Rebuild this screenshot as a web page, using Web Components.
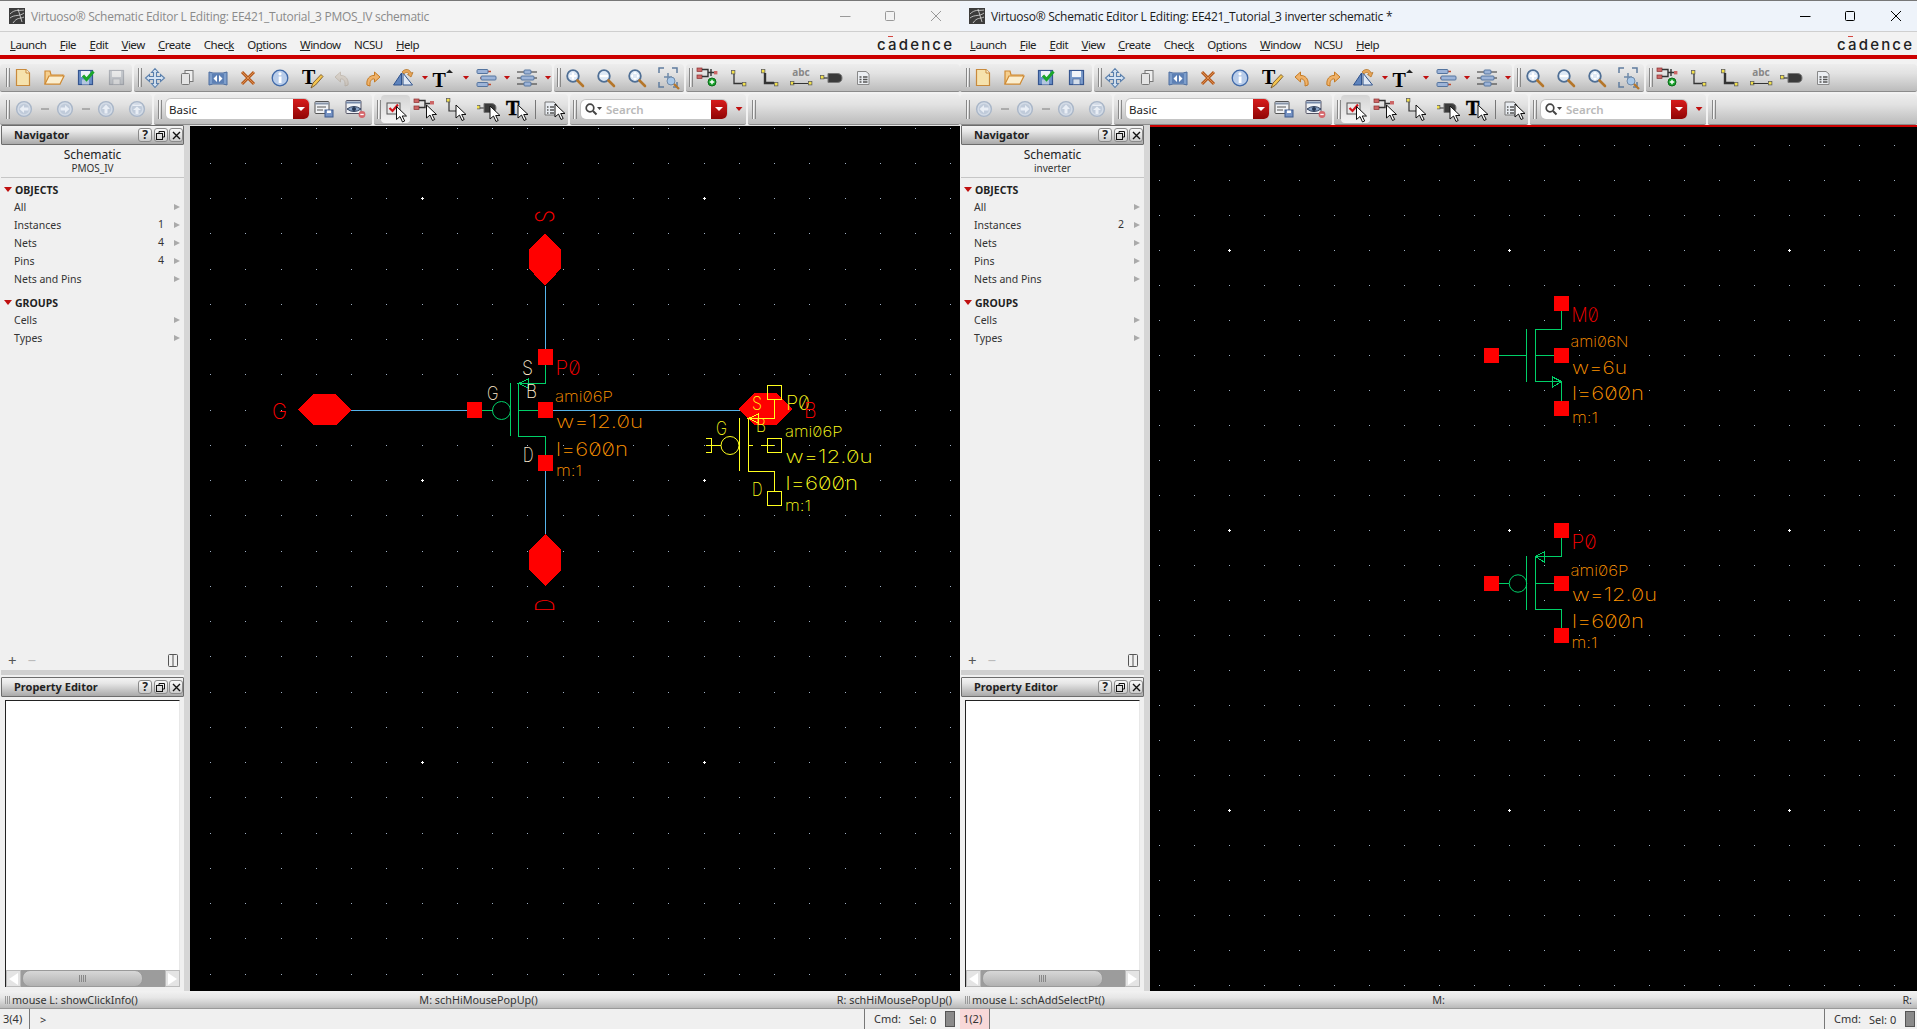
<!DOCTYPE html>
<html><head><meta charset="utf-8"><title>Virtuoso</title>
<style>html,body{margin:0;padding:0;width:1917px;height:1029px;overflow:hidden;background:#d8d8d8}
body{display:flex;font-family:"Noto Sans","Open Sans",sans-serif}</style></head>
<body>
<vi-window label="Virtuoso® Schematic Editor L Editing: EE421_Tutorial_3 PMOS_IV schematic" cell="PMOS_IV" kind="pmos" counts="1,4,4" mouse-m="M: schHiMousePopUp()" mouse-l="mouse L: showClickInfo()" mouse-r="R: schHiMousePopUp()" hist="3(4)" prompt="&gt;" style="--w:960px;--rp:3px"></vi-window>
<vi-window active label="Virtuoso® Schematic Editor L Editing: EE421_Tutorial_3 inverter schematic *" cell="inverter" kind="inverter" counts="2,," mouse-m="M:" mouse-l="mouse L: schAddSelectPt()" mouse-r="R:" hist="1(2)" prompt="" style="--w:957px;--rp:0px"></vi-window>
<script>
const CUR=(x,y)=>`<path transform="translate(${x} ${y})" d="M0 0V13L3.5 10 6 15.5 8.2 14.5 5.7 9.5H10Z" fill="#fff" stroke="#111" stroke-width="1" stroke-linejoin="round"/>`;
const YS=(x,y)=>`<rect x="${x-1.5}" y="${y-1.5}" width="3.4" height="3.4" fill="#f2e04a" stroke="#555" stroke-width=".7"/>`;
const MAG=(c)=>`<circle cx="12" cy="12" r="5.8" fill="#dfe9f5" stroke="#4f6f95" stroke-width="1.8"/><path d="M16.5 16.5L22 22" stroke="#b5762a" stroke-width="2.6" stroke-linecap="round"/>${c}`;
const CIRC=(c)=>`<circle cx="14" cy="14" r="7.4" fill="#d3dbe6" stroke="#a9b6c8" stroke-width="1.4"/><circle cx="14" cy="14" r="5.2" fill="#c0cbda"/>${c}`;
const ICONS={
new:`<path d="M7.5 5.5H17L20.5 9V21.5H7.5Z" fill="#f6e2ad" stroke="#c88a3c" stroke-width="1.2"/><path d="M17 5.5V9H20.5" fill="#fff6d8" stroke="#c88a3c"/>`,
open:`<path d="M5 7V20H20L23 11H11L10 7Z" fill="#f5cf8f" stroke="#cf8a33" stroke-width="1.2"/><path d="M5 20L9 12H24L20 20Z" fill="#fbeecf" stroke="#cf8a33" stroke-width="1.2"/>`,
savecheck:`<rect x="6.5" y="6.5" width="14" height="14" fill="#6a8fc8" stroke="#35558f" stroke-width="1.2"/><rect x="9" y="7" width="9" height="6" fill="#eef2f8"/><rect x="10" y="15.5" width="7" height="5" fill="#b5c6df"/><path d="M11 11.5L14.5 15.5 21.5 7.5" fill="none" stroke="#1aa62a" stroke-width="3"/>`,
save:`<rect x="6.5" y="6.5" width="14" height="14" fill="#7c9ccb" stroke="#35558f" stroke-width="1.2"/><rect x="9" y="7" width="9" height="6" fill="#f1f4f9"/><rect x="10" y="15" width="7" height="5.5" fill="#d5deea" stroke="#35558f" stroke-width=".6"/>`,
move:`<path d="M14 4.5L17.5 8.5H15.5V12.5H19.5V10.5L23.5 14 19.5 17.5V15.5H15.5V19.5H17.5L14 23.5 10.5 19.5H12.5V15.5H8.5V17.5L4.5 14 8.5 10.5V12.5H12.5V8.5H10.5Z" fill="#d6e3f2" stroke="#5b80ad" stroke-width="1.1"/>`,
copy:`<rect x="12" y="6.5" width="8" height="11" fill="#eee" stroke="#777"/><rect x="8.5" y="9.5" width="8" height="11" rx="1" fill="#e4e4e4" stroke="#777"/>`,
stretch:`<path d="M5 8L9 9H19L23 8V21L19 20H9L5 21Z" fill="#7f9fcc" stroke="#4d6d9e"/><rect x="8" y="10" width="12" height="9" fill="#5d80b5"/><path d="M13 11V18L9.5 14.5ZM15 11V18L18.5 14.5Z" fill="#fff"/>`,
del:`<path d="M8 8L20 20M20 8L8 20" stroke="#b5591d" stroke-width="3"/><path d="M8 8L20 20M20 8L8 20" stroke="#e39a5a" stroke-width=".8"/>`,
info:`<circle cx="14" cy="14" r="7.8" fill="#b9cdea" stroke="#3e68a8" stroke-width="1.3"/><rect x="12.7" y="12.5" width="2.8" height="6.5" fill="#fff"/><circle cx="14" cy="9.8" r="1.6" fill="#fff"/>`,
tpen:`<text x="4" y="20" font-family="Liberation Serif,serif" font-size="20" font-weight="700" fill="#000">T</text><path d="M13 24L15 19 23 10.5 25 12.5 17.5 21Z" fill="#f4c550" stroke="#6b4a1b" stroke-width=".8"/>`,
undo:`<path d="M20 21C21 15 17 11 12.5 11.5V8L7 13 12.5 18V15C15.5 14.5 17.5 17 17 22Z" fill="#efb26a" stroke="#c57a22"/>`,
redo:`<path d="M8 21C7 15 11 11 15.5 11.5V8L21 13 15.5 18V15C12.5 14.5 10.5 17 11 22Z" fill="#efb26a" stroke="#c57a22"/>`,
mirror:`<path d="M12.5 21H4.5L12.5 9Z" fill="#5f84bd" stroke="#2f528c"/><path d="M14 21H23.5L14 9Z" fill="#dfe8f4" stroke="#2f528c"/><path d="M13 8C16 4 21 5 22 9L24 8.5 22 13 18.5 10.5 20 10C19 8 16 8 15 10Z" fill="#e8a659" stroke="#b06f20" stroke-width=".7"/>`,
tcap:`<text x="3.5" y="23" font-family="Liberation Serif,serif" font-size="20" font-weight="700" fill="#000">T</text><path d="M17 9L20.5 5.5 24 9Z" fill="#222"/>`,
align1:`<path d="M5 7.5H19M8 14H24M5 20.5H19" stroke="#c4472c" stroke-width="1.3"/><rect x="5" y="5.5" width="11" height="4" rx="1" fill="#9db4d8" stroke="#54749f"/><rect x="9" y="12" width="15" height="4" rx="1" fill="#9db4d8" stroke="#54749f"/><rect x="5" y="18.5" width="11" height="4" rx="1" fill="#9db4d8" stroke="#54749f"/>`,
align2:`<path d="M4 8H24M4 14H24M4 20H24" stroke="#333" stroke-width="1"/><rect x="11" y="6" width="7" height="4" rx="1" fill="#9db4d8" stroke="#54749f"/><rect x="8" y="12" width="13" height="4" rx="1" fill="#9db4d8" stroke="#54749f"/><rect x="11" y="18" width="7" height="4" rx="1" fill="#9db4d8" stroke="#54749f"/>`,
zoomin:MAG(`<path d="M8.5 12H15.5M12 8.5V15.5" stroke="#fff" stroke-width="2.2"/>`),
zoomout:MAG(`<path d="M8 12H16" stroke="#fff" stroke-width="2.2"/>`),
zoomfit:MAG(`<path d="M12 7.5L14 10H10ZM12 16.5L14 14H10ZM7.5 12L10 10V14ZM16.5 12L14 10V14Z" fill="#fff"/>`),
zoomsel:`<path d="M5 9V4H10M18 4H23V9M23 18V23H19M10 23H5V18" fill="none" stroke="#5f7c9f" stroke-width="1.5"/><path d="M14 9V17M10 13H18" stroke="#6f8aa9" stroke-width="1.5"/><circle cx="17" cy="17" r="4" fill="#a9c8e8" stroke="#6f8aa9"/><path d="M20 20L25 25" stroke="#b5762a" stroke-width="2.2"/>`,
addconn:`<rect x="4" y="4" width="5" height="3.5" fill="#cc6666" stroke="#8b2f2f" stroke-width=".7"/><rect x="4" y="11" width="5" height="3.5" fill="#cc6666" stroke="#8b2f2f" stroke-width=".7"/><path d="M9 5.5H15V12.5H9M15 8.5H18M18 5V12M18 8.5H21" fill="none" stroke="#333" stroke-width="1.4"/><rect x="21" y="7" width="3.4" height="3.4" fill="#cc6666"/><circle cx="19" cy="18" r="4" fill="#17a32a" stroke="#0b6b18"/><path d="M16.7 18H21.3M19 15.7V20.3" stroke="#fff" stroke-width="1.4"/>`,
wire:`${YS(9,8)}<path d="M10 10V19.5H18" fill="none" stroke="#333" stroke-width="1.3"/>${YS(20,20)}`,
widewire:`${YS(7,7)}<path d="M9 9V19H18" fill="none" stroke="#333" stroke-width="2.4"/>${YS(20,20)}`,
label:`<text x="14" y="12" text-anchor="middle" font-family="Noto Sans,sans-serif" font-size="10" font-weight="700" fill="#888">abc</text>${YS(5,19)}<path d="M6 19.5H21" stroke="#333"/>${YS(23,19)}`,
pin:`${YS(4,13)}<path d="M6 14H11" stroke="#333" stroke-width="1.2"/><path d="M10 9.5H19Q24 9.5 24 14T19 18.5H10Z" fill="#3a3a3a" stroke="#777"/>`,
note:`<path d="M8.5 7.5H17L20 10V20.5H8.5Z" fill="#eceff3" stroke="#888"/><path d="M10.5 13H12.5M14 13H18.5M10.5 15.5H12.5M14 15.5H18.5M10.5 18H12.5M14 18H18.5" stroke="#555" stroke-width="1.3"/>`,
back:CIRC(`<path d="M9.5 14L14 10V12.5H18.5V15.5H14V18Z" fill="#e9eef5"/>`),
fwd:CIRC(`<path d="M18.5 14L14 10V12.5H9.5V15.5H14V18Z" fill="#e9eef5"/>`),
up:CIRC(`<path d="M14 9.5L18 14H15.5V18.5H12.5V14H10Z" fill="#e9eef5"/>`),
top:CIRC(`<path d="M9.5 9.5H18.5V11H9.5ZM14 11.5L18 15H15.5V19H12.5V15H10Z" fill="#e9eef5"/>`),
dash:`<path d="M10 14H18" stroke="#999" stroke-width="1.4"/>`,
saveset:`<rect x="5" y="6.5" width="14" height="12" rx="1" fill="#f0f2f5" stroke="#555"/><path d="M5 8.5H19" stroke="#8794a8" stroke-width="2"/><path d="M7 12H16M7 15H13" stroke="#555"/><rect x="15" y="15" width="8" height="7" fill="#7693c4" stroke="#3c5b8f"/><rect x="17" y="15.5" width="4" height="2.5" fill="#fff"/>`,
eye:`<rect x="5" y="5.5" width="15" height="13" rx="1" fill="#eef1f5" stroke="#556"/><path d="M5 7.5H20" stroke="#7488a8" stroke-width="2"/><path d="M6 14Q13 9 20 14Q13 19 6 14Z" fill="#8ba4c8" stroke="#2d3e5c"/><circle cx="13" cy="14" r="2" fill="#243652"/><circle cx="21" cy="19.5" r="3.4" fill="#d4676b"/><path d="M19.3 19.5H22.7" stroke="#fff" stroke-width="1.3"/>`,
chk:`<rect x="6" y="8" width="13" height="11" fill="#e8e8e8" stroke="#555"/><path d="M8.5 13L11.5 16 17 9.5" fill="none" stroke="#d3151c" stroke-width="2.2"/>${CUR(15.5,11.5)}`,
conn:`<rect x="2" y="4" width="5" height="3.5" fill="#cc6666" stroke="#8b2f2f" stroke-width=".7"/><rect x="2" y="11" width="5" height="3.5" fill="#cc6666" stroke="#8b2f2f" stroke-width=".7"/><path d="M7 5.5H13V12.5H7M13 8.5H18" fill="none" stroke="#333" stroke-width="1.4"/><rect x="18" y="6" width="4" height="3.5" fill="#cc6666"/>${CUR(14.5,10)}`,
wirec:`${YS(6,5)}<path d="M7 7V16H15" fill="none" stroke="#333" stroke-width="1.2"/>${CUR(14,10)}`,
pinc:`${YS(1,12)}<path d="M3 13H7" stroke="#333"/><path d="M7 8.5H14Q19 8.5 19 13T14 17.5H7Z" fill="#3a3a3a" stroke="#777"/>${CUR(13,11)}`,
tc:`<text x="1" y="20" font-family="Liberation Serif,serif" font-size="20" font-weight="700" fill="#000" stroke="#000" stroke-width=".5">T</text>${CUR(13,10)}`,
notec:`<path d="M5 7H14L17 10V20H5Z" fill="#e9edf2" stroke="#777"/><path d="M7 12H8.5M10 12H14M7 15H8.5M10 15H14M7 18H8.5M10 18H14" stroke="#555" stroke-width="1.3"/>${CUR(15,9)}`
};
function def(name,css,html,init){
  customElements.define(name,class extends HTMLElement{
    constructor(){super();this.attachShadow({mode:'open'})}
    connectedCallback(){
      if(this._d)return;this._d=1;
      const h=typeof html==='function'?html(this):html;
      this.shadowRoot.innerHTML=`<style>${css}</style>${h}`;
      if(init)init(this);
    }
  });
}
def('vi-icon',':host{display:block;width:28px;height:28px;flex:none}svg{display:block}',
 e=>`<svg width="28" height="28" viewBox="0 0 28 28">${ICONS[e.getAttribute('name')]||''}</svg>`);
def('vi-titlebar',`:host{display:flex;align-items:center;height:30px;background:var(--tb);border-bottom:1px solid #cfcfcf;font:12px "Open Sans","Noto Sans",sans-serif;color:var(--tc)}
.ic{margin-left:9px;flex:none}.t{margin-left:6px;flex:1;white-space:nowrap;letter-spacing:-.27px}
.c{flex:none;margin-right:calc(16px + var(--rp));display:flex}.c svg{display:block}`,
e=>`<svg class="ic" width="16" height="16" viewBox="0 0 16 16"><rect width="16" height="16" fill="#3c3c3c"/><path d="M1 6C6 1 9 3 15 2M1 10C6 6 10 9 15 5M4 15C8 9 11 11 15 9M9 1L13 14" fill="none" stroke="#ddd" stroke-width=".8"/></svg>
<div class="t"><slot></slot></div><div class="c"><svg width="101" height="12" viewBox="0 0 101 12" fill="none" stroke="var(--tc2)"><path d="M0 6.5H10.5"/><rect x="45.5" y="1.5" width="9" height="9" rx="1"/><path d="M101 1L91 11M91 1L101 11"/></svg></div>`);
def('vi-menubar',`:host{display:flex;align-items:center;height:22px;padding:1px calc(5px + var(--rp)) 0 10px;background:#f2f2f2;font:11.5px "Noto Sans",sans-serif;letter-spacing:-.5px;color:#222;border-bottom:4px solid #cc0000;box-sizing:content-box}
span{margin-right:13.4px;white-space:nowrap}.sp{flex:1;margin:0}
.cad{font:500 15px "Inter","Liberation Sans",sans-serif;letter-spacing:2.17px;color:#222;margin:0 -2.17px 0 0;position:relative}
.cad i{position:absolute;left:11px;top:1px;width:5px;height:1.5px;background:#d5443f}`,
`<span><u>L</u>aunch</span><span><u>F</u>ile</span><span><u>E</u>dit</span><span><u>V</u>iew</span><span><u>C</u>reate</span><span>Chec<u>k</u></span><span>O<u>p</u>tions</span><span><u>W</u>indow</span><span>NCSU</span><span><u>H</u>elp</span><span class="sp"></span><span class="cad">cadence<i></i></span>`);
const TR=[
 [[0,132,6,[['new',23],['open',54],['savecheck',86],['save',117]]],
  [134,552,4,[['move',155],['copy',187],['stretch',218],['del',248],['info',280],['tpen',312],['undo',342],['redo',373],['mirror',403],['dd',425],['tcap',443],['dd',466],['align1',486],['dd',507],['align2',527],['dd',548]]],
  [554,684,3,[['zoomin',575],['zoomout',606],['zoomfit',637],['zoomsel',668]]],
  [686,0,3,[['addconn',707],['wire',738],['widewire',770],['label',801],['pin',832],['note',863]]]],
 [[0,152,6,[['back',24],['dash',45],['fwd',65],['dash',86],['up',106],['top',137]]],
  [153,371,4,[['combo',236.5],['saveset',323],['eye',354]]],
  [373,567,3,[['chk',394],['conn',425],['wirec',455],['pinc',490],['tc',518],['sep',534],['notec',553]]],
  [569,745,3,[['search',653],['dd',738]]],
  [747,0,4,[]]]
];
def('vi-toolbars',`:host{display:block;background:#f2f2f2;padding:5px 0 0}
.row{display:flex;height:28px;margin-bottom:2px}.row+.row{height:31px;margin-bottom:0}
.row:first-child .sec{padding-bottom:2px}
.sec{display:flex;align-items:center;flex:none;box-sizing:border-box;background:linear-gradient(#ededed,#e2e2e2 35%,#bcbcbc);border-bottom:1px solid #8b8b8b;border-radius:4px 4px 2px 2px;margin-right:2px;position:relative}
.sec.l{flex:1;margin-right:0}
.h{width:4px;height:19px;flex:none;border-left:1px solid #888;border-right:1px solid #888;box-sizing:border-box;position:relative}
.h:after{content:"";position:absolute;left:0;top:0;bottom:0;width:1px;background:#f4f4f4}
.it{flex:none;position:relative}.dd{width:7px;height:4px;background:#c01010;clip-path:polygon(0 0,100% 0,50% 100%);flex:none}
.sep{width:1px;height:19px;background:#777;flex:none}
.sel{position:absolute;left:7px;top:1px;width:29px;height:28px;background:linear-gradient(#d4d4d4,#f4f4f4);border-radius:4px}
.combo,.search{display:flex;flex:none;height:20px;background:#fff;border-radius:5px;overflow:hidden;box-shadow:0 0 0 1px #c4c4c4;font:11.5px "Noto Sans",sans-serif;color:#222;align-items:center;position:relative;box-sizing:border-box}
.combo{width:143px}.search{width:146px;height:19px;color:#b9b9b9;font-weight:600}
.combo b,.search b{margin-left:auto;width:16px;align-self:stretch;background:linear-gradient(#d81c1c,#8f0505);display:flex;align-items:center;justify-content:center;font-weight:400}
.combo b:after,.search b:after{content:"";width:8px;height:4px;background:#fff;clip-path:polygon(0 0,100% 0,50% 100%)}
.combo span{margin-left:3px}.search span{margin-left:2px}.search svg{margin-left:3px}`,
e=>TR.map(r=>`<div class="row">`+r.map(([a,b,h,items],si)=>{
  let cur=h+4,out=`<span class="h" style="margin-left:${h}px"></span>`;
  if(a===373)out=`<span class="sel"></span>`+out;
  for(const[n,c]of items){
    const w=n==='combo'?143:n==='search'?146:n==='dd'?7:n==='sep'?1:28;
    const ml=c-a-w/2-cur;cur=c-a+w/2;
    const st=`margin-left:${ml}px`;
    if(n==='dd')out+=`<span class="dd" style="${st}"></span>`;
    else if(n==='sep')out+=`<span class="sep" style="${st}"></span>`;
    else if(n==='combo')out+=`<div class="combo" style="${st}"><span>Basic</span><b></b></div>`;
    else if(n==='search')out+=`<div class="search" style="${st}"><svg width="20" height="14" viewBox="0 0 20 14"><circle cx="6" cy="6" r="3.8" fill="none" stroke="#444" stroke-width="1.7"/><path d="M9 9L12.5 12.5" stroke="#444" stroke-width="2"/><path d="M13 5H18L15.5 8Z" fill="#444"/></svg><span>Search</span><b></b></div>`;
    else{
      const dim=!e.hasAttribute('active')&&(n==='save'||n==='undo');
      out+=`<vi-icon class="it" name="${n}" style="${st}${dim?';opacity:.35;filter:grayscale(.7)':''}"></vi-icon>`;
    }
  }
  return `<div class="sec${b?'':' l'}" style="${b?'width:'+(b-a)+'px':''}">${out}</div>`;
}).join('')+`</div>`).join(''));
def('vi-panel-title',`:host{display:flex;align-items:center;height:18px;border:1px solid #6c6c6c;border-radius:1px;background:linear-gradient(#f4f4f4,#e6e6e6 30%,#a9a9a9);font:700 11px "Noto Sans",sans-serif;color:#222;padding-left:12px}
.s{flex:1;margin-top:-2px}.b{width:14px;height:14px;box-sizing:border-box;border:1px solid #8a8a8a;border-radius:3px;background:linear-gradient(#fafafa,#ccc);margin-left:1.5px;display:flex;align-items:center;justify-content:center;font-size:12px;line-height:1}
svg{display:block}`,
`<span class="s"><slot></slot></span><span class="b">?</span><span class="b"><svg width="9" height="9" viewBox="0 0 9 9" fill="none" stroke="#111"><path d="M3 2.5V.5H8.5V6H6.5"/><rect x=".5" y="2.5" width="6" height="6"/></svg></span><span class="b"><svg width="9" height="9" viewBox="0 0 9 9" stroke="#111" stroke-width="1.4"><path d="M1 1L8 8M8 1L1 8"/></svg></span>`);
def('vi-nav-group',`:host{display:flex;align-items:center;height:17px;font:700 10.5px "Noto Sans",sans-serif;color:#222;padding-left:3px}
i{width:0;height:0;border:4px solid transparent;border-top:5px solid #c01010;border-bottom:0;margin-right:3px}`,`<i></i><slot></slot>`);
def('vi-nav-row',`:host{display:flex;align-items:center;height:18px;font:10.5px "Noto Sans",sans-serif;color:#333;padding-left:13px}
.s{flex:1}.n{margin-right:10px;margin-top:-2px}
i{width:0;height:0;border:3.5px solid transparent;border-left:6px solid #aaa;border-right:0;margin-right:4px}`,
e=>`<span class="s"><slot></slot></span><span class="n">${e.getAttribute('count')||''}</span><i></i>`);
def('vi-scrollbar',`:host{display:flex;height:17px;margin:0 4px 0 4px;border-left:1px solid #222;background:#9c9c9c;flex:none}
.a{width:15px;background:#e4e4e4;border:1px solid #bbb;box-sizing:border-box;display:flex;align-items:center;justify-content:center}
.a i{width:0;height:0;border:6px solid transparent}
.l i{border-right:9px solid #fff;border-left:0}.r i{border-left:9px solid #fff;border-right:0}
.t{width:121px;margin-left:1px;border-radius:8px;background:linear-gradient(#d7d7d7,#b2b2b2);border:1px solid #9a9a9a;box-sizing:border-box;display:flex;align-items:center;justify-content:center}
.t b{width:8px;height:7px;background:repeating-linear-gradient(90deg,#888 0 1px,transparent 1px 2px)}
.s{flex:1}`,`<span class="a l"><i></i></span><span class="t"><b></b></span><span class="s"></span><span class="a r"><i></i></span>`);
def('vi-dock',`:host{display:flex;flex-direction:column;width:184px;flex:none;background:#f0f0f0;padding-left:1px;box-sizing:border-box;height:100%}
.nav{flex:none;height:545px;display:flex;flex-direction:column}
.hd{height:29px;padding-top:3px;text-align:center;border-bottom:1px solid #c6c6c6;font:12px/14px "Noto Sans",sans-serif;color:#222;flex:none}
.hd small{display:block;font-size:10px;line-height:13px;color:#333}
.list{padding-top:3px;flex:1}.gap{height:6px}
.ft{display:flex;align-items:center;height:20px;color:#555;font:15px "Noto Sans",sans-serif;padding-left:7px;flex:none}
.ft .m{margin-left:11px;color:#bbb}.ft svg{margin-left:auto;margin-right:6px}
.sp{height:7px;background:#f0f0f0;border-top:5px solid #d0d0d0;box-sizing:border-box;flex:none}
.box{flex:1;margin:3px 4px 0 4px;background:#fff;border-top:1px solid #222;border-left:1px solid #222;border-right:1px solid #e8e8e8}
vi-panel-title{flex:none}.pad{height:4px;flex:none}`,
e=>{const c=(e.getAttribute('counts')||',,').split(',');return `<div class="nav"><vi-panel-title>Navigator</vi-panel-title>
<div class="hd">Schematic<small>${e.getAttribute('cell')}</small></div>
<div class="list"><vi-nav-group>OBJECTS</vi-nav-group><vi-nav-row>All</vi-nav-row><vi-nav-row count="${c[0]}">Instances</vi-nav-row><vi-nav-row count="${c[1]}">Nets</vi-nav-row><vi-nav-row count="${c[2]}">Pins</vi-nav-row><vi-nav-row>Nets and Pins</vi-nav-row><div class="gap"></div><vi-nav-group>GROUPS</vi-nav-group><vi-nav-row>Cells</vi-nav-row><vi-nav-row>Types</vi-nav-row></div>
<div class="ft"><span>+</span><span class="m">−</span><svg width="10" height="13" viewBox="0 0 10 13" fill="none" stroke="#555"><rect x=".5" y=".5" width="9" height="12" rx="1"/><path d="M5 .5V12.5"/></svg></div></div>
<div class="sp"></div><vi-panel-title>Property Editor</vi-panel-title><div class="box"></div><vi-scrollbar></vi-scrollbar><div class="pad"></div>`});
/* canvas drawing */
const RED='#ff0000',GR='#00d068',BL='#56b4ea',OR='#ff9400',CR='#ffecd0',YL='#ffff1e';
const fz=s=>`font-family="Inter,'DejaVu Sans',sans-serif" font-weight="200" style="font-feature-settings:'zero' 1" font-size="${s}"`;
const T=(x,y,s,col,w,size)=>`<text x="${x}" y="${y}" fill="${col}" ${fz(size)} textLength="${w}" lengthAdjust="spacingAndGlyphs">${s}</text>`;
const TR90=(cx,cy,s,col,w,size)=>`<text transform="rotate(-90 ${cx} ${cy})" x="${cx-w/2}" y="${cy+size*.36}" fill="${col}" ${fz(size)} textLength="${w}" lengthAdjust="spacingAndGlyphs">${s}</text>`;
const L=(d,col)=>`<path d="${d}" fill="none" stroke="${col}" stroke-width="1" shape-rendering="crispEdges"/>`;
const SQ=(x,y,w=15,h=15)=>`<rect x="${x}" y="${y}" width="${w}" height="${h}" fill="${RED}" shape-rendering="crispEdges"/>`;
const PG=p=>`<polygon points="${p}" fill="${RED}" shape-rendering="crispEdges"/>`;
const OS=(x,y)=>`<rect x="${x}.5" y="${y}.5" width="14" height="14" fill="none" stroke="${YL}" shape-rendering="crispEdges"/>`;
const CI=(x,y,r,c)=>`<circle cx="${x}" cy="${y}" r="${r}" fill="none" stroke="${c}" stroke-width="1"/>`;
function dots(x0,y0,step,xa,xb,ya,yb){let s='',d='';
  for(let i=-20;i<40;i++){const x=Math.round(x0+i*step);if(x<xa||x>xb)continue;
   for(let j=-20;j<40;j++){const y=Math.round(y0+j*step);if(y<ya||y>yb)continue;
    if(i%8==0&&j%8==0)s+=`M${x-1} ${y}h3v1h-3zM${x} ${y-1}h1v3h-1z`;else d+=`M${x} ${y}h1v1h-1z`;}}
  return `<path d="${d}" fill="#9fb0c4" shape-rendering="crispEdges"/><path d="${s}" fill="#fff" shape-rendering="crispEdges"/>`;}
const SCENES={
pmos:()=>dots(421.7,480,35.25,190,960,126,991)+
 L('M545.5 286V349M545.5 471V534M351 410.5H467M553 410.5H739',BL)+
 PG('545,233.5 561,250 561,268.5 545,286 529,268.5 529,250')+PG('545,534 561,550 561,570 545,586 529,570 529,550')+PG('298,410 313,394 336,394 351,410 336,425 313,425')+
 TR90(545,216.5,'S',RED,13,26)+TR90(545,605.5,'D',RED,13,26)+T(272,419,'G',RED,15,22)+
 L('M545.5 365V383.5H518.5V436.5H545.5V455M510.5 383V436M518.5 410.5H538M482 410.5H492M518.5 383.5L528.5 379V388Z',GR)+CI(501.5,410.5,9,GR)+
 SQ(538,349,15,16)+SQ(467,402,15,16)+SQ(538,402,15,16)+SQ(538,455,15,16)+
 T(555.5,375,'P0',RED,25,20)+T(522,375,'S',CR,11,20)+T(487,400,'G',CR,11.5,19)+T(526,398,'B',CR,11,19)+T(523,462,'D',CR,10.5,20)+
 T(555,402,'ami06P',OR,58,15)+T(556,428,'w=12.0u',OR,87,18)+T(556,456,'l=600n',OR,72,18.5)+T(556,476,'m:1',OR,26,15)+
 PG('739,409 754,393 777,393 792,409 777,425 754,425')+
 L('M774.5 400V418.5H748.5V471.5H774.5V491M739.5 418V471M706 445.5H721M748.5 445.5H753M761 445.5H774M748.5 418.5L758.5 414V423Z',YL)+CI(730,445.5,9,YL)+
 OS(767,385)+OS(767,438)+OS(767,491)+L('M706 438.5H711.5V452.5H706',YL)+
 T(752,410,'S',YL,10,19)+T(716,435,'G',YL,11,19)+T(756,432,'B',YL,10,18)+T(752,496,'D',YL,10.5,19)+
 T(786,410,'P0',YL,24,20)+T(804,418,'B',RED,12.5,22)+T(785,437,'ami06P',YL,57.5,15)+T(785.5,463,'w=12.0u',YL,87,18)+T(785.5,490,'l=600n',YL,72.5,18.5)+T(785,511,'m:1',YL,26,15),
inverter:()=>`<rect x="1150" y="126" width="767" height="1" fill="#cc0000"/>`+dots(1509,530,35,1150,1917,128,991)+
 L('M1561.5 310V329.5H1535.5V381.5H1561.5V401M1526.5 329V382M1499 355.5H1526M1535.5 355.5H1554M1561.5 381.5L1552.5 377V387Z',GR)+
 SQ(1554,296)+SQ(1554,348)+SQ(1554,401)+SQ(1484,348)+
 T(1571.5,322,'M0',RED,27,20)+T(1570.5,347,'ami06N',OR,58,15)+T(1572,374,'w=6u',OR,55,18)+T(1572,400,'l=600n',OR,72,18.5)+T(1572,423,'m:1',OR,26,15)+
 L('M1561.5 538V556.5H1535.5V609.5H1561.5V628M1526.5 556V610M1499 583.5H1509M1535.5 583.5H1554M1535.5 556.5L1544 552V562Z',GR)+CI(1518,583.5,8.7,GR)+
 SQ(1554,523)+SQ(1554,576)+SQ(1554,628)+SQ(1484,576)+
 T(1571.5,549,'P0',RED,25,20)+T(1570.5,576,'ami06P',OR,58,15)+T(1572,601,'w=12.0u',OR,85,18)+T(1572,628,'l=600n',OR,72,18.5)+T(1571.5,648,'m:1',OR,26,15)
};
def('vi-canvas',`:host{display:block;flex:1;background:#000;min-width:0;overflow:hidden;margin-left:6px;border-top:1px solid var(--cbt)}svg{display:block}`,
e=>{const k=e.getAttribute('kind'),x=k==='pmos'?190:1150,w=k==='pmos'?770:767;
 return `<svg width="${w}" height="865" viewBox="${x} 126 ${w} 865">${SCENES[k]()}</svg>`});
def('vi-mousebar',`:host{display:grid;grid-template-columns:1fr auto 1fr;align-items:center;height:17px;background:linear-gradient(#f2f2f2,#e6e6e6 40%,#b9b9b9);border-bottom:1px solid #999;font:10.8px "Noto Sans",sans-serif;color:#333;padding:0 calc(5px + var(--rp)) 0 5px;box-sizing:content-box}
.l{display:flex;align-items:center;white-space:nowrap}.g{width:6px;height:8px;margin-right:1px;background:repeating-linear-gradient(90deg,#999 0 1px,transparent 1px 2px)}.r{text-align:right}`,
e=>`<span class="l"><span class="g"></span>${e.getAttribute('l')}</span><span>${e.getAttribute('m')}</span><span class="r">${e.getAttribute('r')}</span>`);
def('vi-status',`:host{display:flex;align-items:center;height:20px;background:#f0f0f0;font:11px "Noto Sans",sans-serif;color:#333;padding-right:calc(2px + var(--rp))}
.h{width:30px;height:20px;line-height:20px;box-sizing:border-box;padding-left:3px;border-right:1px solid #777;background:var(--hb)}
.p{margin-left:10px}.s{flex:1}.c{border-left:1px solid #777;height:20px;line-height:20px;padding-left:9px;width:35px}.e{width:36px}
.b{width:8px;height:14px;background:#8a8a8a;border:1px solid #555;box-sizing:content-box}`,
e=>`<span class="h">${e.getAttribute('hist')}</span><span class="p">${e.getAttribute('prompt')||''}</span><span class="s"></span><span class="c">Cmd:</span><span class="e">Sel: 0</span><span class="b"></span>`);
def('vi-window',`:host{display:flex;flex-direction:column;flex:none;width:var(--w);height:1029px;box-sizing:border-box;border-top:1px solid #777;background:#f0f0f0;overflow:hidden;position:relative}
.main{flex:1;display:flex;min-height:0;background:#d6d6d6}`,
e=>{const a=e.hasAttribute('active');const g=n=>e.getAttribute(n);
 e.style.setProperty('--tb',a?'#eef3fa':'#f3f3f3');e.style.setProperty('--tc',a?'#1a1a1a':'#8a8a8a');e.style.setProperty('--tc2',a?'#000':'#999');
 e.style.setProperty('--cbt',a?'#cc0000':'#e4e4e4');e.style.setProperty('--hb',a?'#f8d8d8':'transparent');
 return `<vi-titlebar>${g('label')}</vi-titlebar><vi-menubar></vi-menubar><vi-toolbars${a?' active':''}></vi-toolbars>
 <div class="main"><vi-dock cell="${g('cell')}" counts="${g('counts')}"></vi-dock><vi-canvas kind="${g('kind')}"></vi-canvas></div>
 <vi-mousebar l="${g('mouse-l')}" m="${g('mouse-m')}" r="${g('mouse-r')}"></vi-mousebar><vi-status hist="${g('hist')}" prompt="${(g('prompt')||'').replace('>','&gt;')}"></vi-status>`});
</script>
</body></html>
